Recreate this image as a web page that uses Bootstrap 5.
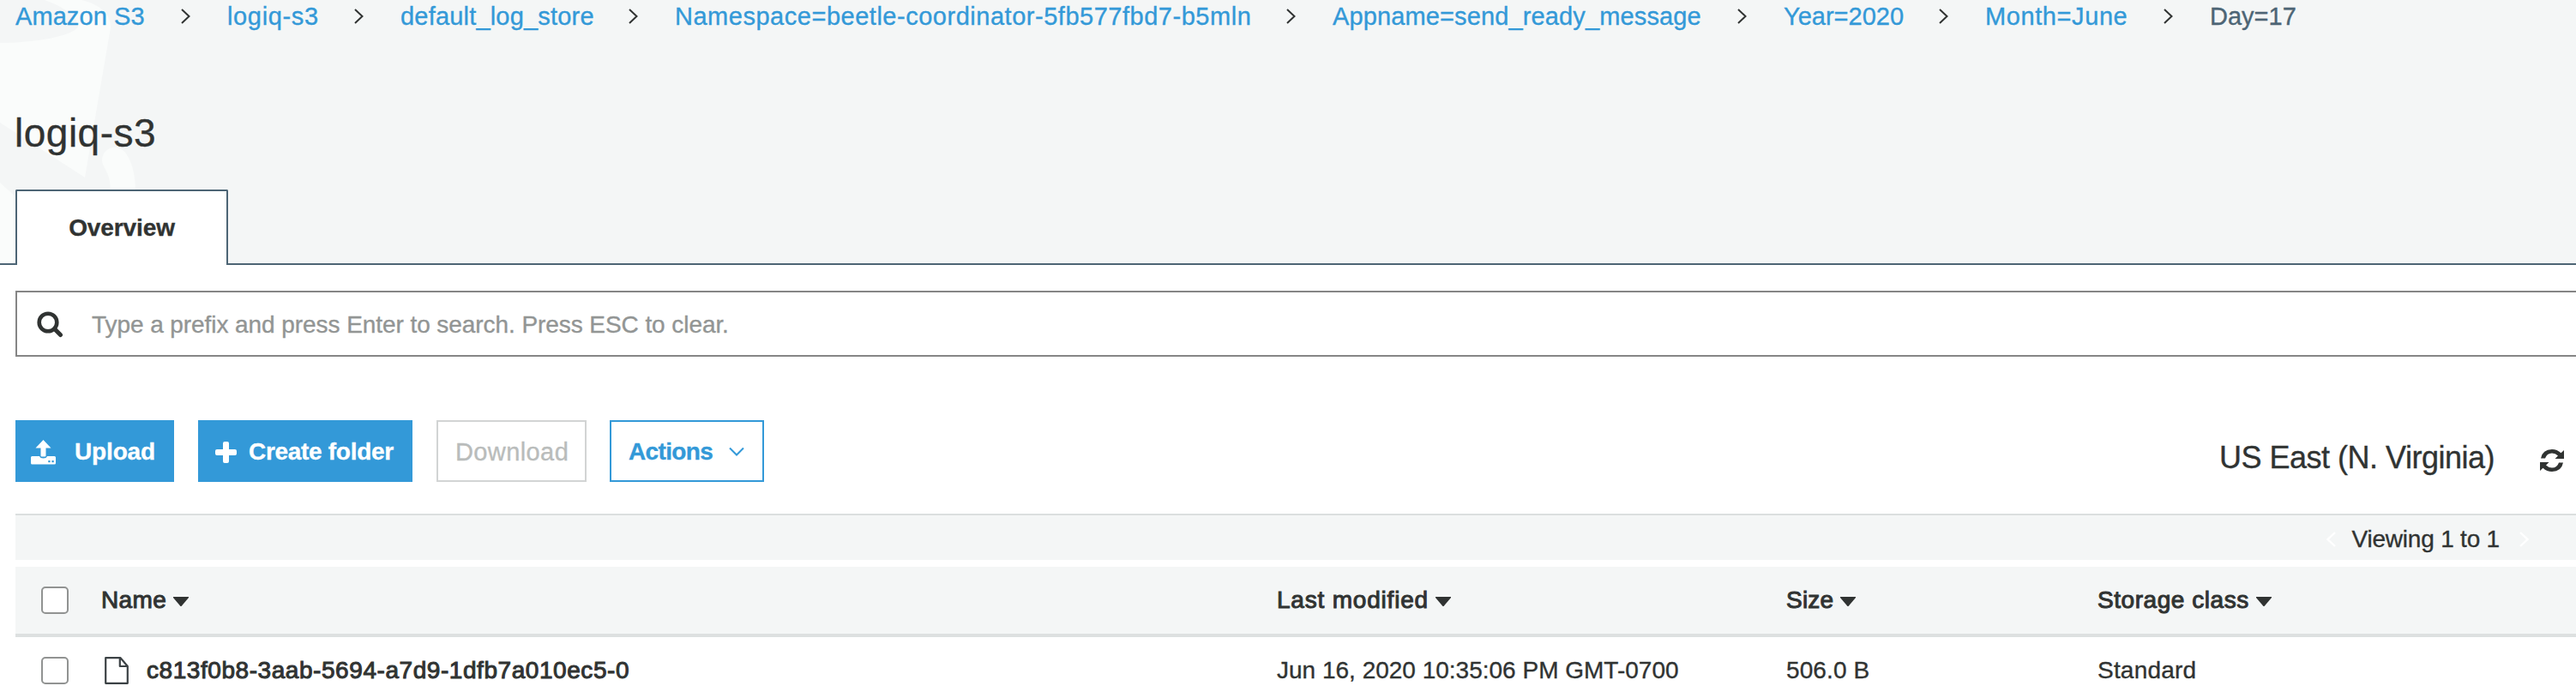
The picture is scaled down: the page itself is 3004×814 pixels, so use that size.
<!DOCTYPE html>
<html lang="en">
<head>
<meta charset="utf-8">
<title>logiq-s3</title>
<link rel="stylesheet" href="https://cdn.jsdelivr.net/npm/bootstrap@5.3.0/dist/css/bootstrap.min.css">
<style>
body{font-family:"Liberation Sans",Arial,sans-serif;font-size:28px;line-height:38px;color:#303332;background:#fff;overflow:hidden;height:814px;-webkit-text-stroke:.35px currentColor}
svg{display:block;flex:none}
.masthead{background:#f4f6f6;height:309px;border-bottom:2px solid #4d6575}
.watermark{left:0;top:0}
.crumbs{height:128px;padding-left:18px;font-size:29px;white-space:nowrap;list-style:none}
.crumbs li{height:38px;padding-right:43px}
.crumbs a{color:#3399d8;text-decoration:none}
.crumbs svg{margin-top:-1px}
.crumbs li:nth-child(1){width:247px;letter-spacing:.08px}
.crumbs li:nth-child(2){width:202px;letter-spacing:.65px}
.crumbs li:nth-child(3){width:320px;letter-spacing:.19px}
.crumbs li:nth-child(4){width:767px;letter-spacing:.52px}
.crumbs li:nth-child(5){width:526px;letter-spacing:.13px}
.crumbs li:nth-child(6){width:235px}
.crumbs li:nth-child(7){width:262px;letter-spacing:.59px}
.crumbs li:nth-child(8){color:#4d6575;padding:0}
.title{font-size:46px;line-height:54px;height:93px;padding-left:17px;letter-spacing:.5px;font-weight:400}
.tab-current{width:248px;height:88px;margin-left:18px;padding-top:0;background:#fff;border:2px solid #4d6575;border-bottom:0;border-radius:2px 2px 0 0;font-weight:700;letter-spacing:-.1px}
.content{padding:30px 0 0 18px}
.search-box{height:77px;border:2px solid #858585;border-right:0;padding-left:23px;color:#929594;letter-spacing:-.07px}
.search-box span{margin-left:32px;padding-top:2px}
.toolbar{height:72px;margin-top:74px;padding-right:14px}
.tool{height:72px;border:2px solid #3399d8;border-radius:0;font-size:28px;line-height:38px;font-weight:700;padding:2px 0 0;display:flex;align-items:center;white-space:nowrap}
.tool-fill,.tool-fill:hover{background:#3399d8;color:#fff}
.tool-upload{width:185px;padding-left:16px;letter-spacing:-.15px}
.tool-upload svg{margin-right:22px}
.tool-create{width:250px;margin-left:28px;padding-left:18px;letter-spacing:-.3px}
.tool-create svg{margin-right:14px}
.tool-download{width:175px;margin-left:28px;padding-left:20px;border-color:#d2d4d4;color:#b9bcbb;font-size:29px;font-weight:400;letter-spacing:.4px}
.tool-actions{width:180px;margin-left:27px;padding-left:20px;color:#3399d8;letter-spacing:-.65px}
.tool-actions svg{margin-left:19px}
.region{font-size:36px;line-height:42px;letter-spacing:-.5px;padding-top:15px}
.region svg{margin:7px 0 0 53px}
.pager{height:54px;margin-top:37px;border-top:2px solid #dbdfdf;background:#f4f6f6;padding:3px 55px 0 0}
.pager span{margin:0 23px 0 18px;letter-spacing:-.2px}
.files{margin-top:8px}
.files-row{display:grid;grid-template-columns:100px 1371px 594px 363px 1fr;height:76px;align-items:center;white-space:nowrap;padding-top:2px}
.files-head{background:#f4f6f6;height:82px;border-bottom:4px solid #dde0e0;padding-top:0}
.medium{-webkit-text-stroke:1px currentColor}
.box{width:32px;height:32px;margin-left:30px;margin-top:-1px;border:2px solid #919392;border-radius:5px;background:#fff}
.caret{margin-left:8px;margin-top:2px}
.page-icon{margin:0 21px 0 4px}
</style>
</head>
<body>
<header class="masthead position-relative">
  <svg class="watermark position-absolute" width="170" height="307" viewBox="0 0 170 307">
    <path fill="#fafcfb" d="M0 0H95C115 5 129 15 129 32L99 207L0 143Z"/>
    <path fill="#f4f6f6" d="M0 0H52C73 7 91 20 91 31C86 42 40 50 0 50Z"/>
    <path fill="#fafcfb" d="M0 213L30 240V307H0ZM119 187C119 176 130 169 140 173C151 178 158 200 158 222H128C131 205 119 195 119 187Z"/>
  </svg>
  <div class="position-relative">
    <ol class="crumbs d-flex m-0">
      <li class="d-flex align-items-center justify-content-between"><a href="#">Amazon S3</a><svg width="11" height="18" viewBox="0 0 11 18"><path d="M1 1L9.5 9L1 17" fill="none" stroke="#303332" stroke-width="2"/></svg></li>
      <li class="d-flex align-items-center justify-content-between"><a href="#">logiq-s3</a><svg width="11" height="18" viewBox="0 0 11 18"><path d="M1 1L9.5 9L1 17" fill="none" stroke="#303332" stroke-width="2"/></svg></li>
      <li class="d-flex align-items-center justify-content-between"><a href="#">default_log_store</a><svg width="11" height="18" viewBox="0 0 11 18"><path d="M1 1L9.5 9L1 17" fill="none" stroke="#303332" stroke-width="2"/></svg></li>
      <li class="d-flex align-items-center justify-content-between"><a href="#">Namespace=beetle-coordinator-5fb577fbd7-b5mln</a><svg width="11" height="18" viewBox="0 0 11 18"><path d="M1 1L9.5 9L1 17" fill="none" stroke="#303332" stroke-width="2"/></svg></li>
      <li class="d-flex align-items-center justify-content-between"><a href="#">Appname=send_ready_message</a><svg width="11" height="18" viewBox="0 0 11 18"><path d="M1 1L9.5 9L1 17" fill="none" stroke="#303332" stroke-width="2"/></svg></li>
      <li class="d-flex align-items-center justify-content-between"><a href="#">Year=2020</a><svg width="11" height="18" viewBox="0 0 11 18"><path d="M1 1L9.5 9L1 17" fill="none" stroke="#303332" stroke-width="2"/></svg></li>
      <li class="d-flex align-items-center justify-content-between"><a href="#">Month=June</a><svg width="11" height="18" viewBox="0 0 11 18"><path d="M1 1L9.5 9L1 17" fill="none" stroke="#303332" stroke-width="2"/></svg></li>
      <li>Day=17</li>
    </ol>
    <h1 class="title m-0">logiq-s3</h1>
    <div class="tab-current d-flex align-items-center justify-content-center">Overview</div>
  </div>
</header>
<main class="content">
  <div class="search-box d-flex align-items-center">
    <svg width="32" height="32" viewBox="0 0 32 32"><g fill="none" stroke="#303332"><circle cx="13" cy="14" r="10.3" stroke-width="4.6"/><path d="M20.5 21.5L27.5 28.5" stroke-width="5" stroke-linecap="round"/></g></svg>
    <span>Type a prefix and press Enter to search. Press ESC to clear.</span>
  </div>
  <div class="toolbar d-flex justify-content-between">
    <div class="d-flex">
      <button class="btn tool tool-fill tool-upload"><svg width="29" height="29" viewBox="0 0 29 29"><path fill="#fff" d="M14.500 0L23.500 9.500H17.500V18.500Q17.500 19.500 16.500 19.500H12.500Q11.500 19.500 11.500 18.500V9.500H5.500ZM1.500 19H10Q11 21.500 14.500 21.500T19 19H27.500Q29 19 29 20.500V27Q29 28.500 27.500 28.500H1.500Q0 28.500 0 27V20.500Q0 19 1.500 19Z"/><path fill="#3399d8" d="M20.300 24h2.200v2.200h-2.200zM24.500 24h2.200v2.200h-2.200z"/></svg>Upload</button>
      <button class="btn tool tool-fill tool-create"><svg width="25" height="25" viewBox="0 0 25 25"><path fill="#fff" d="M11 0H14Q16 0 16 2V9H23Q25 9 25 11V14Q25 16 23 16H16V23Q16 25 14 25H11Q9 25 9 23V16H2Q0 16 0 14V11Q0 9 2 9H9V2Q9 0 11 0Z"/></svg>Create folder</button>
      <button class="btn tool tool-download">Download</button>
      <button class="btn tool tool-actions">Actions<svg width="18" height="12" viewBox="0 0 18 12"><path d="M1 1.500L9 9.500L17 1.500" fill="none" stroke="#3399d8" stroke-width="2"/></svg></button>
    </div>
    <div class="region d-flex align-items-center">
      <span>US East (N. Virginia)</span>
      <svg width="28" height="28" viewBox="0 0 28 28"><path fill="#303332" d="M28 2V12H17.500L21 8.500Q18 5.500 14 5.500Q8 5.500 6 11.500H1Q3 1 14 1Q20 1 24.500 5.300ZM0 26V16H10.500L7 19.500Q10 22.500 14 22.500Q20 22.500 22 16.500H27Q25 27 14 27Q8 27 3.500 22.700Z"/></svg>
    </div>
  </div>
  <div class="pager d-flex align-items-center justify-content-end">
    <svg width="11" height="18" viewBox="0 0 11 18"><path d="M10 1L1.500 9L10 17" fill="none" stroke="#fff" stroke-width="2.400"/></svg>
    <span>Viewing 1 to 1</span>
    <svg width="11" height="18" viewBox="0 0 11 18"><path d="M1 1L9.500 9L1 17" fill="none" stroke="#fff" stroke-width="2.400"/></svg>
  </div>
  <div class="files">
    <div class="files-row files-head medium">
      <div class="box"></div>
      <div class="d-flex align-items-center"><span style="letter-spacing:.4px">Name</span><svg class="caret" width="18" height="11" viewBox="0 0 18 11"><path fill="#303332" d="M0 0H18V1L9.500 11H8.500L0 1Z"/></svg></div>
      <div class="d-flex align-items-center"><span style="letter-spacing:.8px">Last modified</span><svg class="caret" width="18" height="11" viewBox="0 0 18 11"><path fill="#303332" d="M0 0H18V1L9.500 11H8.500L0 1Z"/></svg></div>
      <div class="d-flex align-items-center"><span style="letter-spacing:.2px">Size</span><svg class="caret" width="18" height="11" viewBox="0 0 18 11"><path fill="#303332" d="M0 0H18V1L9.500 11H8.500L0 1Z"/></svg></div>
      <div class="d-flex align-items-center"><span style="letter-spacing:.55px">Storage class</span><svg class="caret" width="18" height="11" viewBox="0 0 18 11"><path fill="#303332" d="M0 0H18V1L9.500 11H8.500L0 1Z"/></svg></div>
    </div>
    <div class="files-row">
      <div class="box"></div>
      <div class="d-flex align-items-center"><svg class="page-icon" width="28" height="32" viewBox="0 0 28 32"><path d="M1.200 1.200H18.500L26.800 11V30.800H1.200ZM17.800 1.500V11H26.500" fill="none" stroke="#3c4245" stroke-width="2.200" stroke-linejoin="round"/></svg><span class="medium" style="letter-spacing:.56px">c813f0b8-3aab-5694-a7d9-1dfb7a010ec5-0</span></div>
      <div>Jun 16, 2020 10:35:06 PM GMT-0700</div>
      <div style="letter-spacing:.1px">506.0 B</div>
      <div style="letter-spacing:.2px">Standard</div>
    </div>
  </div>
</main>
<script src="https://cdn.jsdelivr.net/npm/bootstrap@5.3.0/dist/js/bootstrap.bundle.min.js"></script>
</body>
</html>
